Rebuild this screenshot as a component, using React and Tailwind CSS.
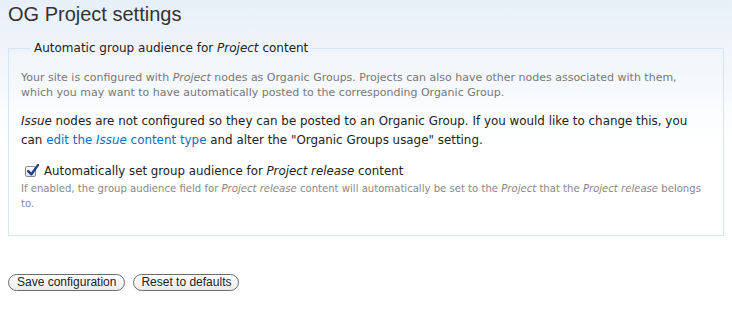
export default function App() {
    return (
        <div className="min-h-[327px] w-[732px] bg-[linear-gradient(to_bottom,#e7eff8_0px,#f3f7fb_70px,#ffffff_140px)] px-2 pt-[2px] font-['DejaVu_Sans',sans-serif] text-[#222]">
            <h1 className="font-['Liberation_Sans',sans-serif] text-[20px] leading-6 text-[#333]">
                OG Project settings
            </h1>

            {/* FIELDSET */}
            <fieldset className="mt-[14px] h-[196px] w-[716px] border border-[#d5e5f3] px-3 pt-[14px]">
                <legend className="ml-[10px] px-[3px] text-[12px] leading-4 text-[#222]">
                    Automatic group audience for <em>Project</em> content
                </legend>

                <p className="text-[11px] leading-[15px] text-[#777]">
                    Your site is configured with <em>Project</em> nodes as Organic Groups. Projects can also have other nodes associated with them,
                    which you may want to have automatically posted to the corresponding Organic Group.
                </p>

                <p className="mt-[12px] text-[11.9px] leading-[19px] text-[#222]">
                    <em>Issue</em> nodes are not configured so they can be posted to an Organic Group. If you would like to change this, you
                    can{" "}
                    <a className="text-[#0a6fc2]">
                        edit the <em>Issue</em> content type
                    </a>{" "}
                    and alter the "Organic Groups usage" setting.
                </p>

                <label className="mt-[13px] flex items-center gap-[8px] pl-[4px] text-[11.8px] leading-4">
                    <span className="relative h-[11px] w-[11px] shrink-0 rounded-[2px] border border-[#8a8a8a] bg-[linear-gradient(to_bottom,#ffffff,#e4e4e4)]">
                        <svg viewBox="0 0 12 12" className="absolute -top-[3px] left-[0px] h-[13px] w-[13px]">
                            <path d="M2 6.5 L5 9.5 L11 1" fill="none" stroke="#1d3f86" strokeWidth="2.2" strokeLinecap="round" strokeLinejoin="round" />
                        </svg>
                    </span>
                    <span>
                        Automatically set group audience for <em>Project release</em> content
                    </span>
                </label>
                <p className="mt-[2px] text-[10.1px] leading-[15px] text-[#888]">
                    <span className="whitespace-nowrap">
                        If enabled, the group audience field for <em>Project release</em> content will automatically be set to the <em>Project</em> that the <em>Project release</em> belongs
                    </span>
                    <br />
                    to.
                </p>
            </fieldset>

            {/* BUTTONS */}
            <div className="mt-[38px] flex gap-[8px]">
                <button className="h-[17px] rounded-full border border-[#6b6b6b] bg-[linear-gradient(to_bottom,#ffffff,#ececec)] px-[8px] font-['Liberation_Sans',sans-serif] text-[12px] leading-[15px] text-[#222]">
                    Save configuration
                </button>
                <button className="h-[17px] rounded-full border border-[#6b6b6b] bg-[linear-gradient(to_bottom,#ffffff,#ececec)] px-[7px] font-['Liberation_Sans',sans-serif] text-[12px] leading-[15px] text-[#222]">
                    Reset to defaults
                </button>
            </div>
        </div>
    );
}
